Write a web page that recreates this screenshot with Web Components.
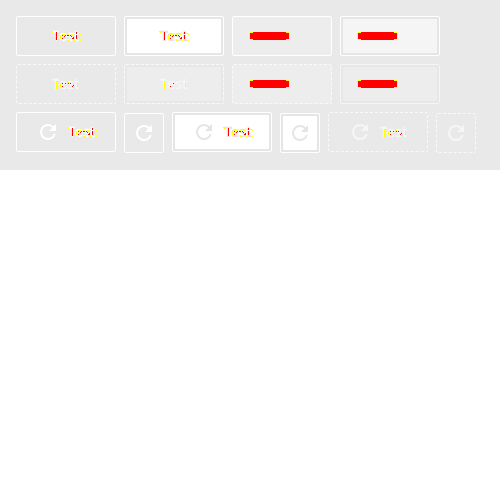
<!DOCTYPE html>
<html lang="en"><head><meta charset="utf-8"><title>Buttons</title>
<style>html,body{margin:0;background:#fff}</style></head><body>
<button-board></button-board>
<script>
const marks = {
  strong: `<path fill="#ff0" d="M-1 0h2v1h-2zM0 1h1v1h-1zM3 2h1v8h-1zM5 9h1v1h-1zM7 0h1v2h-1zM8 4h1v4h-1zM10 3h3v1h-3zM10 6h3v1h-3zM9 9h1v1h-1zM13 9h1v1h-1zM15 3h2v2h-2zM16 9h2v1h-2zM19 3h2v1h-2zM22 9h1v1h-1zM25 1h1v1h-1zM25 4h1v4h-1zM27 2h1v1h-1zM28 3h1v1h-1zM27 9h2v1h-2z"/><path fill="#f00" d="M4 1h1v8h-1zM10 4h1v1h-1zM13 4h1v1h-1zM10 7h1v1h-1zM12 5h1v1h-1zM15 4h2v1h-2zM18 4h1v1h-1zM19 5h1v1h-1zM20 7h2v1h-2zM21 6h1v1h-1zM24 1h1v2h-1zM24 4h1v4h-1z"/>`,
  faint: `<path fill="#ff0" d="M4 2h1v8h-1zM7 0h1v1h-1zM8 4h1v4h-1zM15 3h2v2h-2zM25 1h1v1h-1zM25 4h1v4h-1zM27 2h1v1h-1zM27 9h1v1h-1z"/><path fill="#f00" d="M10 4h1v1h-1zM13 4h1v1h-1zM16 4h1v1h-1zM18 4h1v1h-1zM10 7h1v1h-1zM20 7h1v1h-1zM21 6h1v1h-1z"/>`,
  slight: `<path fill="#ff0" d="M4 2h1v8h-1zM7 0h1v1h-1zM25 1h1v1h-1zM25 4h1v4h-1z"/><path fill="#f00" d="M13 4h1v1h-1zM10 7h1v1h-1z"/>`
};
class MarkedLabel extends HTMLElement{
  connectedCallback(){
    this.attachShadow({mode:'open'}).innerHTML=`<style>
    :host{display:block;position:relative;width:28px;height:20px;font:14px/20px "Noto Sans",sans-serif;letter-spacing:.25px;-webkit-text-stroke:.6px currentColor;white-space:nowrap}
    svg{position:absolute;left:0;top:5px;width:28px;height:11px;overflow:visible;shape-rendering:crispEdges}
    </style><slot></slot><svg viewBox="0 0 28 11" aria-hidden="true">${marks[this.getAttribute('level')]||marks.strong}</svg>`;
  }
}
class RefreshIcon extends HTMLElement{
  connectedCallback(){
    this.attachShadow({mode:'open'}).innerHTML=`<style>:host{display:block;width:24px;height:24px}svg{display:block}</style>
    <svg width="24" height="24" viewBox="0 0 24 24" fill="currentColor"><path d="M17.65 6.35A7.958 7.958 0 0 0 12 4a8 8 0 1 0 7.73 10h-2.08A5.99 5.99 0 0 1 12 18a6 6 0 1 1 0-12c1.66 0 3.14.69 4.22 1.78L13 11h7V4l-2.35 2.35z"/></svg>`;
  }
}
class ChangeBar extends HTMLElement{
  connectedCallback(){
    this.attachShadow({mode:'open'}).innerHTML=`<style>:host{display:block;width:41px;height:8px}svg{display:block;shape-rendering:crispEdges}</style>
    <svg width="41" height="8"><path fill="#ff0" d="M1 0h39v1h1v6h-1v1H1v-1H0V1h1z"/><path fill="red" d="M4 0h33v1h3v6h-3v1H4V7H1V1h3z"/></svg>`;
  }
}
class UiButton extends HTMLElement{
  connectedCallback(){
    this.attachShadow({mode:'open'}).innerHTML=`<style>
    :host{display:flex;box-sizing:border-box;width:100px;height:40px;border:1px solid #fff;border-radius:2px;align-items:center;justify-content:center;color:#fff}
    :host([icon]){width:40px;margin-top:1px}
    :host([with-icon]){gap:8px;justify-content:flex-start;padding-left:19px}
    :host([bar]){background:#ededed;justify-content:flex-start;padding-left:16px}
    :host([ring]){box-shadow:inset 0 0 0 2px #e5e5e5}
    :host([solid]){background:#fff;color:#e5e5e5}
    :host([light]){background:#f5f5f5}
    :host([disabled]){border:1px dashed #f9f9f9;color:#f6f6f6}
    :host([disabled][ring]){background:#ededed;box-shadow:inset 0 0 0 2px #e7e7e7}
    :host([quiet]){border-color:#f5f5f5;box-shadow:inset 0 0 0 2px #e7e7e7}
    </style><slot></slot>`;
  }
}
class ButtonBoard extends HTMLElement{
  connectedCallback(){
    this.attachShadow({mode:'open'}).innerHTML=`<style>
    :host{display:flex;flex-direction:column;gap:8px;box-sizing:border-box;width:500px;height:170px;padding:16px;background:#e9e9e9}
    .row{display:flex;gap:8px;align-items:flex-start;height:40px}
    </style>
    <div class="row"><ui-button><marked-label>Test</marked-label></ui-button><ui-button solid ring><marked-label>Test</marked-label></ui-button><ui-button bar><change-bar></change-bar></ui-button><ui-button bar light ring><change-bar></change-bar></ui-button></div>
    <div class="row"><ui-button disabled><marked-label level="faint">Test</marked-label></ui-button><ui-button disabled ring><marked-label level="slight">Test</marked-label></ui-button><ui-button bar disabled><change-bar></change-bar></ui-button><ui-button bar quiet><change-bar></change-bar></ui-button></div>
    <div class="row"><ui-button with-icon><refresh-icon></refresh-icon><marked-label>Test</marked-label></ui-button><ui-button icon><refresh-icon></refresh-icon></ui-button><ui-button with-icon solid ring><refresh-icon></refresh-icon><marked-label>Test</marked-label></ui-button><ui-button icon solid ring><refresh-icon></refresh-icon></ui-button><ui-button with-icon disabled><refresh-icon></refresh-icon><marked-label level="faint">Test</marked-label></ui-button><ui-button icon disabled><refresh-icon></refresh-icon></ui-button></div>`;
  }
}
customElements.define('marked-label',MarkedLabel);
customElements.define('refresh-icon',RefreshIcon);
customElements.define('change-bar',ChangeBar);
customElements.define('ui-button',UiButton);
customElements.define('button-board',ButtonBoard);
</script></body></html>
